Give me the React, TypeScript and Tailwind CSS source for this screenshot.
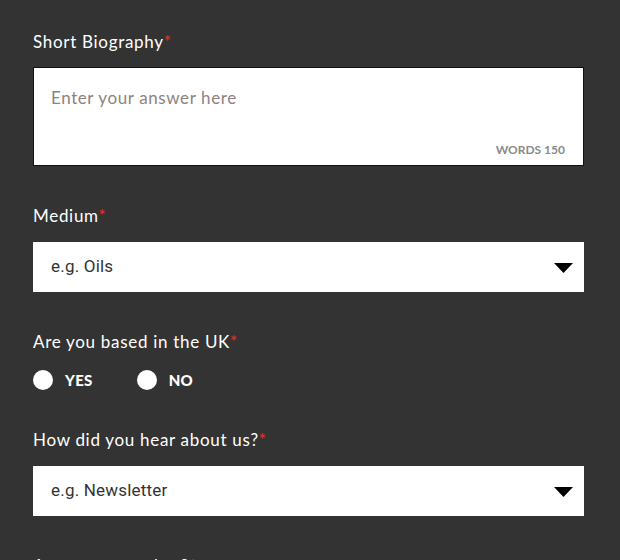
import { useState } from "react";

const labelCls =
  "block text-[17px] leading-6 tracking-[0.7px] text-white font-['Lato','Open_Sans',sans-serif]";

function Label({ text }: { text: string }) {
  return (
    <label className={labelCls}>
      {text}
      <span className="text-[#e0362c]">*</span>
    </label>
  );
}

function SelectField({ placeholder }: { placeholder: string }) {
  return (
    <div className="relative mt-[14px] h-[50px] w-[551px] bg-white">
      <select
        defaultValue=""
        className="h-full w-full appearance-none bg-white pl-[18px] pr-10 text-[17px] tracking-[0.2px] text-[#333] outline-none font-['Roboto',sans-serif]"
      >
        <option value="" disabled>
          {placeholder}
        </option>
      </select>
      <svg
        className="pointer-events-none absolute right-[11px] top-[21px]"
        width="19"
        height="10"
        viewBox="0 0 19 10"
      >
        <path d="M0 0H19L9.5 10Z" fill="#000" />
      </svg>
    </div>
  );
}

function Radio({ label, checked, onClick }: { label: string; checked: boolean; onClick: () => void }) {
  return (
    <button type="button" onClick={onClick} className="flex h-5 items-center gap-3">
      <span className="flex h-5 w-5 items-center justify-center rounded-full bg-white">
        {checked ? <span className="h-2 w-2 rounded-full bg-[#333]" /> : null}
      </span>
      <span className="text-[15px] leading-5 font-black tracking-[0.3px] text-white font-['Lato',sans-serif]">
        {label}
      </span>
    </button>
  );
}

export default function App() {
  const [uk, setUk] = useState<string | null>(null);

  return (
    <div className="h-[560px] w-[620px] overflow-hidden bg-[#333333] px-[33px] pt-[30px]">
      <div className="flex flex-col gap-[38px]">
        <div>
          <Label text="Short Biography" />
          <div className="relative mt-[13px] h-[99px] w-[551px] border border-[#111] bg-white">
            <textarea
              className="h-full w-full resize-none bg-white px-[17px] pt-[17px] text-[17px] tracking-[0.6px] text-[#333] outline-none placeholder:text-[#8c837e] font-['Lato',sans-serif]"
              placeholder="Enter your answer here"
            />
            <span className="pointer-events-none absolute bottom-[6px] right-[18px] text-[12px] font-bold text-[#8a8a8a] font-['Lato',sans-serif]">
              WORDS 150
            </span>
          </div>
        </div>

        <div>
          <Label text="Medium" />
          <SelectField placeholder="e.g. Oils" />
        </div>

        <div>
          <Label text="Are you based in the UK" />
          <div className="mt-4 flex h-5 items-center gap-[44px]">
            <Radio label="YES" checked={uk === "yes"} onClick={() => setUk("yes")} />
            <Radio label="NO" checked={uk === "no"} onClick={() => setUk("no")} />
          </div>
        </div>

        <div>
          <Label text="How did you hear about us?" />
          <SelectField placeholder="e.g. Newsletter" />
        </div>

        <div>
          <Label text="Are you a member?" />
        </div>
      </div>
    </div>
  );
}
